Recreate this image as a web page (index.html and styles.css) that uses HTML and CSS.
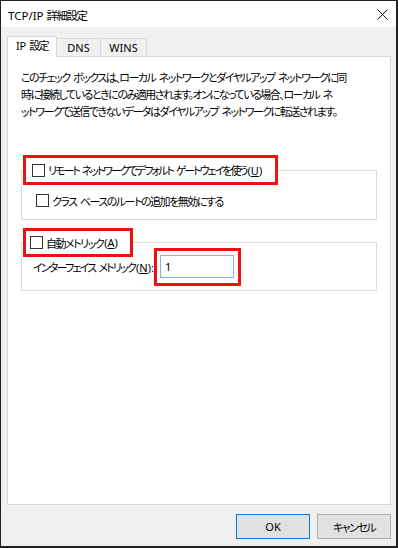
FILE: index.html
```html
<!DOCTYPE html>
<html lang="ja">
<head>
    <meta charset="UTF-8">
    <title>TCP/IP 詳細設定</title>
    <link rel="stylesheet" href="styles.css">
</head>
<body>
    <div class="window">
        <div class="titlebar">
            <span class="title">TCP/IP <span class="jp">詳細設定</span></span>
            <svg class="close" width="11" height="11" viewBox="0 0 11 11">
                <path d="M0.5 0.5 L10.5 10.5 M10.5 0.5 L0.5 10.5" stroke="#111" stroke-width="1" fill="none"/>
            </svg>
        </div>

        <div class="content">
            <div class="tabs">
                <div class="tab active">IP <span class="jp">設定</span></div>
                <div class="tab tab-dns">DNS</div>
                <div class="tab tab-wins">WINS</div>
            </div>

            <div class="panel">
                <p class="desc jp">このチェック ボックスは、ローカル ネットワークとダイヤルアップ ネットワークに同<br>時に接続しているときにのみ適用されます。オンになっている場合、ローカル ネ<br>ットワークで送信できないデータはダイヤルアップ ネットワークに転送されます。</p>

                <fieldset class="group group-gateway">
                    <legend>
                        <label class="mark mark-gateway"><span class="check"></span><span class="jp">リモート ネットワークでデフォルト ゲートウェイを使う</span><span class="key">(<u>U</u>)</span></label>
                    </legend>
                    <label class="row row-class"><span class="check"></span><span class="jp">クラス ベースのルートの追加を無効にする</span></label>
                </fieldset>

                <fieldset class="group group-metric">
                    <legend>
                        <label class="mark mark-auto"><span class="check"></span><span class="jp">自動メトリック</span><span class="key">(<u>A</u>)</span></label>
                    </legend>
                    <div class="row row-metric">
                        <span class="metric-label"><span class="jp">インターフェイス メトリック</span><span class="key">(<u>N</u>):</span></span>
                        <span class="mark mark-input"><input type="text" value="1"></span>
                    </div>
                </fieldset>
            </div>

            <div class="buttons">
                <button class="btn btn-default">OK</button>
                <button class="btn"><span class="jp">キャンセル</span></button>
            </div>
        </div>
    </div>
</body>
</html>
```

FILE: styles.css
```css
* {
    box-sizing: border-box;
}
body {
    margin: 0;
    font-family: "Noto Sans", "Noto Sans CJK JP", sans-serif;
    font-size: 11px;
    color: #000;
    font-feature-settings: "palt";
}
.jp {
    letter-spacing: -1.5px;
    word-spacing: 2px;
}
.key {
    letter-spacing: 0;
    margin-left: 1px;
}
.window {
    width: 398px;
    height: 548px;
    border: 1px solid #222;
    border-width: 1px 2px 2px 1px;
    display: flex;
    flex-direction: column;
    background: #f0f0f0;
}
.titlebar {
    height: 26px;
    background: #fff;
    display: flex;
    align-items: center;
    justify-content: space-between;
    padding: 1px 8px 0 7px;
    font-size: 11.5px;
}
.close {
    display: block;
}
.content {
    flex: 1;
    padding: 9px 5px 0 6px;
}
.tabs {
    display: flex;
    align-items: flex-end;
    height: 20px;
}
.tab {
    height: 18px;
    border: 1px solid #d9d9d9;
    border-bottom: none;
    background: #f0f0f0;
    text-align: center;
    line-height: 17px;
}
.tab.active {
    width: 50px;
    height: 21px;
    margin-bottom: -1px;
    background: #fff;
    line-height: 18px;
    position: relative;
    z-index: 1;
}
.tab-dns {
    width: 44px;
    border-left: none;
}
.tab-wins {
    width: 46px;
    border-left: none;
}
.panel {
    height: 449px;
    background: #fff;
    border: 1px solid #d9d9d9;
    padding-top: 12px;
}
.desc {
    margin: 0 13px;
    line-height: 17px;
    white-space: nowrap;
}
.group {
    margin: 35px 13px 0 13px;
    padding: 0 0 0 1px;
    border: 1px solid #dcdcdc;
    min-width: 0;
}
.group legend {
    padding: 0;
}
.group-metric {
    margin-top: 8px;
}
.mark {
    display: flex;
    align-items: center;
    border: 3px solid #ee1111;
}
.mark-gateway {
    height: 30px;
    padding: 0 13px 0 6px;
}
.mark-gateway .jp {
    letter-spacing: -2px;
}
.mark-auto {
    height: 29px;
    padding: 0 12px 0 4px;
}
.check {
    width: 13px;
    height: 13px;
    border: 1px solid #333;
    background: #fff;
    margin-right: 3px;
    flex: none;
}
.row {
    display: flex;
    align-items: center;
}
.row-class {
    height: 17px;
    margin: 7px 0 10px 13px;
}
.row-metric {
    margin: -9px 0 4px 10px;
}
.metric-label .jp {
    letter-spacing: -1.8px;
}
.mark-input {
    padding: 4px 4px 5px 3px;
}
.mark-input input {
    width: 74px;
    height: 23px;
    border: 1px solid #7eb4ea;
    padding: 0 4px;
    font: inherit;
    outline: none;
}
.buttons {
    display: flex;
    justify-content: flex-end;
    gap: 7px;
    margin-top: 9px;
}
.btn {
    width: 74px;
    height: 25px;
    background: #e1e1e1;
    border: 1px solid #adadad;
    font: inherit;
    color: #000;
    padding: 0;
}
.btn-default {
    border-color: #0078d7;
}
```
